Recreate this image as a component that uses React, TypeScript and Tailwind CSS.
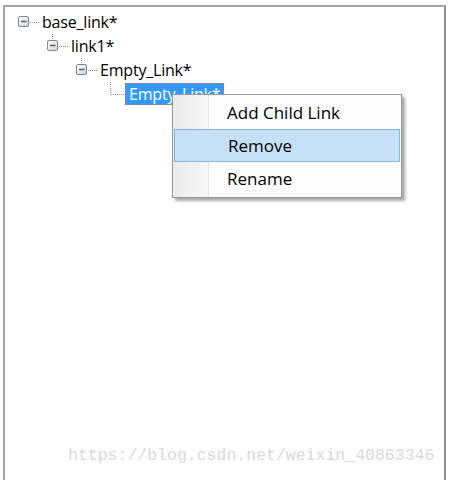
import React from "react";

function ExpandBox({ vline }: { vline?: boolean }) {
  return (
    <svg width="24" height="24" viewBox="0 0 24 24" className="shrink-0">
      {vline && (
        <line x1="5.5" y1="0" x2="5.5" y2="6" stroke="#8a8a8a" strokeWidth="1" strokeDasharray="1 1" />
      )}
      <defs>
        <linearGradient id="bx" x1="0" y1="0" x2="1" y2="1">
          <stop offset="0" stopColor="#ffffff" />
          <stop offset="1" stopColor="#d2d2d2" />
        </linearGradient>
      </defs>
      <rect x="0.5" y="6.5" width="10" height="10" rx="1.5" fill="url(#bx)" stroke="#868686" />
      <line x1="3" y1="11.5" x2="8.5" y2="11.5" stroke="#3a5fa0" strokeWidth="1.4" />
      <line x1="12" y1="12.5" x2="22" y2="12.5" stroke="#8a8a8a" strokeWidth="1" strokeDasharray="1 1" />
    </svg>
  );
}

export default function App() {
  const tf = { fontFamily: '"Open Sans", "Noto Sans", sans-serif' };
  return (
    <div className="relative w-[449px] h-[480px] bg-white overflow-hidden">
      <div className="ml-[3px] mt-[5px] w-[443px] h-[490px] border-2 border-t-[#a5a5a5] border-l-[#a5a5a5] border-r-[#8d9096] border-b-[#8d9096] bg-white">
        <div className="pt-[3px] text-[16px] text-black leading-none" style={tf}>
          <div className="flex items-center h-6 pl-[13px]">
            <ExpandBox />
            <span className="tracking-[-0.2px]">base_link*</span>
          </div>
          <div className="flex items-center h-6 pl-[42px]">
            <ExpandBox vline />
            <span className="tracking-[-0.2px]">link1*</span>
          </div>
          <div className="flex items-center h-6 pl-[71px]">
            <ExpandBox vline />
            <span className="tracking-[-0.2px]">Empty_Link*</span>
          </div>
          <div className="flex items-center h-6 pl-[100px]">
            <svg width="20" height="24" viewBox="0 0 20 24" className="shrink-0">
              <line x1="5.5" y1="0" x2="5.5" y2="12" stroke="#8a8a8a" strokeWidth="1" strokeDasharray="1 1" />
              <line x1="6" y1="12.5" x2="20" y2="12.5" stroke="#8a8a8a" strokeWidth="1" strokeDasharray="1 1" />
            </svg>
            <span className="flex items-center h-[22px] px-[3px] bg-[#3399ff] text-white border border-dotted border-[#c8782a] tracking-[-0.2px]">
              Empty_Link*
            </span>
          </div>
        </div>
      </div>

      <div
        className="absolute left-[172px] top-[94px] w-[230px] h-[104px] border border-[#979797] bg-[#fcfcfc] shadow-[3px_3px_3px_rgba(0,0,0,0.35)] flex"
        style={{ fontFamily: '"Open Sans", "Noto Sans", sans-serif' }}
      >
        <div className="w-[36px] h-full bg-gradient-to-r from-[#ececec] to-[#f6f6f6] border-r border-[#e6e6e6]" />
        <div className="absolute inset-0 pt-[1px] flex flex-col text-[17px] text-black">
          <div className="h-[33px] flex items-center pl-[54px]">Add Child Link</div>
          <div className="h-[33px] mx-[1px] flex items-center pl-[53px] bg-[#c6e0f8] border border-[#7eb8e6]">Remove</div>
          <div className="h-[33px] flex items-center pl-[54px]">Rename</div>
        </div>
      </div>

      <div
        className="absolute left-[68px] top-[448px] text-[16.5px] text-[#d9d9d9] leading-none whitespace-nowrap"
        style={{ fontFamily: '"Liberation Mono", monospace' }}
      >
        https://blog.csdn.net/weixin_40863346
      </div>
    </div>
  );
}
